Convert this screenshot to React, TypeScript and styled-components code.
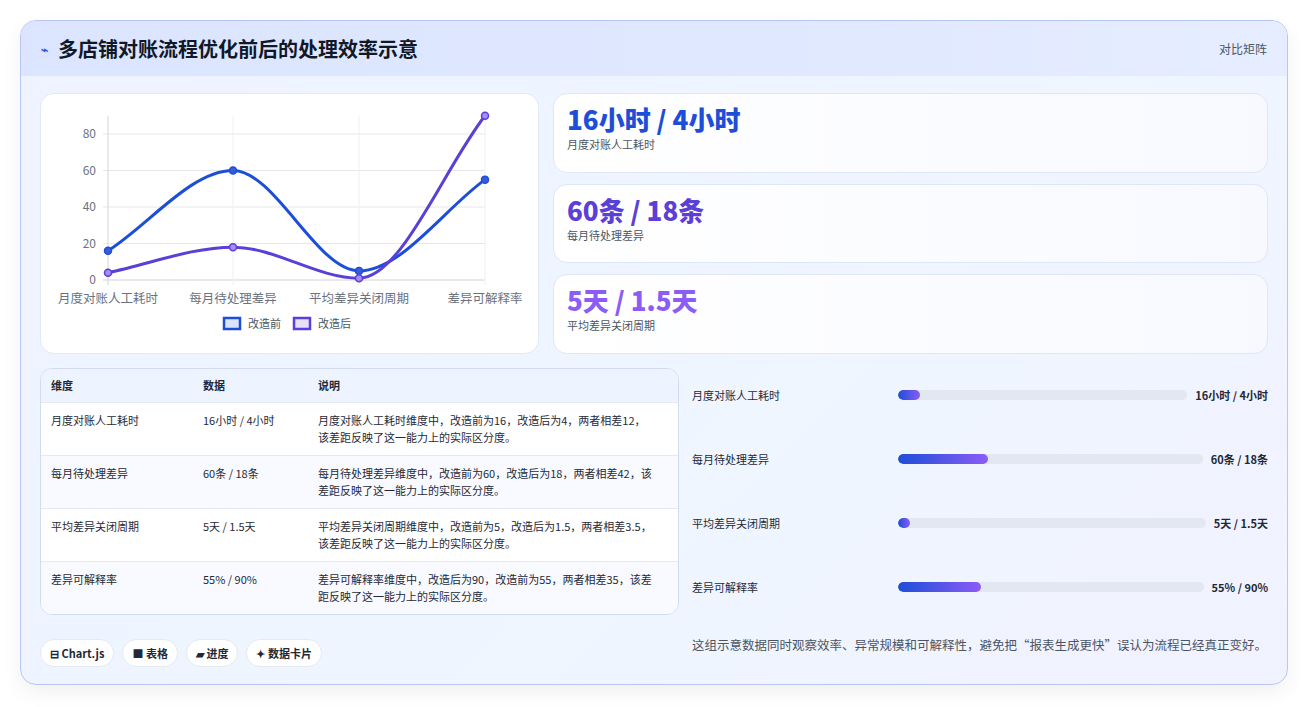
import React from "react";
import styled, { createGlobalStyle } from "styled-components";

const G = createGlobalStyle`
  body{margin:0;background:#fff;font-family:"Noto Sans CJK SC","Noto Sans",sans-serif;color:#1f2937;}
`;
const Page = styled.div`padding:20px 21px 22px 20px;box-sizing:border-box;height:707px;`;
const Card = styled.div`
  height:665px;box-sizing:border-box;border:1px solid #b9c6f3;border-radius:16px;overflow:hidden;
  background:linear-gradient(135deg,#eef3ff,#eff6ff 60%,#f1f2ff);box-shadow:0 8px 20px rgba(0,0,0,.06);
  display:flex;flex-direction:column;`;
const Header = styled.div`
  height:55px;flex:none;display:flex;align-items:center;justify-content:space-between;padding:0 20px 0 20px;
  background:linear-gradient(90deg,#dbe5ff,#e1e9ff 70%,#e6edff);`;
const Title = styled.h1`margin:0;font-size:20px;font-weight:700;color:#111827;display:flex;align-items:center;gap:10px;`;
const Bolt = styled.span`color:#2f5be0;font-size:12px;`;
const Tag = styled.span`font-size:12px;color:#4b5563;`;
const Body = styled.div`padding:17px 19px 0 19px;display:flex;flex-direction:column;`;
const Top = styled.div`display:grid;grid-template-columns:499px 1fr;gap:14px;height:261px;`;
const Panel = styled.div`background:#fff;border:1px solid #e3e8f5;border-radius:14px;`;
const ChartPanel = styled(Panel)`position:relative;`;
const Stats = styled.div`display:grid;grid-template-rows:repeat(3,1fr);gap:11px;`;
const Stat = styled.div`
  background:linear-gradient(90deg,#fff,#f7f9ff);border:1px solid #dfe6f7;border-radius:14px;padding:8px 13px;
  display:flex;flex-direction:column;`;
const StatVal = styled.div<{c:string}>`font-size:26px;font-weight:800;color:${p=>p.c};line-height:34px;font-family:"Noto Sans CJK SC",sans-serif;`;
const StatLab = styled.div`font-size:11px;color:#4b5563;`;
const Bottom = styled.div`display:grid;grid-template-columns:639px 1fr;gap:13px;margin-top:14px;`;
const Table = styled.div`border:1px solid #d3dcef;border-radius:12px;overflow:hidden;background:#fff;`;
const Row = styled.div<{h?:boolean;alt?:boolean}>`
  display:grid;grid-template-columns:152px 115px 1fr;padding:${p=>p.h?"8px 24px 8px 10px":"9px 24px 9px 10px"};
  font-size:11px;line-height:17px;color:#1f2937;border-top:${p=>p.h?"none":"1px solid #e5e9f2"};
  background:${p=>p.h?"#eef4ff":p.alt?"#f8faff":"#fff"};font-weight:${p=>p.h?600:400};
  min-height:${p=>p.h?"16px":"34px"};`;
const Right = styled.div`display:flex;flex-direction:column;`;
const Bars = styled.div`display:flex;flex-direction:column;gap:46px;padding:18px 0 0 0;`;
const BarRow = styled.div`display:flex;align-items:center;height:18px;font-size:11px;`;
const BarLab = styled.div`width:206px;flex:none;color:#1f2937;`;
const Track = styled.div`flex:1;height:10px;border-radius:5px;background:#e2e7f1;overflow:hidden;`;
const Fill = styled.div`height:100%;border-radius:5px;background:linear-gradient(90deg,#1d4ed8,#8b5cf6);`;
const BarVal = styled.div`margin-left:8px;font-weight:700;color:#1f2937;white-space:nowrap;`;
const Foot = styled.div`display:grid;grid-template-columns:639px 1fr;gap:13px;margin-top:14px;`;
const Chips = styled.div`display:flex;gap:8px;padding-top:10px;`;
const Chip = styled.span`
  height:28px;box-sizing:border-box;padding:0 9px;border:1px solid #e5e9f2;border-radius:14px;background:#fff;
  font-size:11px;font-weight:600;display:flex;align-items:center;gap:3px;color:#1f2937;`;
const Note = styled.p`margin:6px 0 0;font-size:12.5px;line-height:20px;color:#4b5563;`;

const xs=[67,192,318,444];
const y=(v:number)=>186-v*1.825;
function path(vals:number[]){
  const p=vals.map((v,i)=>[xs[i],y(v)]);
  const n=p.length;const d0:number[]=[];
  for(let i=0;i<n-1;i++)d0.push((p[i+1][1]-p[i][1])/(p[i+1][0]-p[i][0]));
  const m:number[]=p.map((_,i)=>{
    if(i===0)return d0[0];if(i===n-1)return d0[n-2];
    if(d0[i-1]*d0[i]<=0)return 0;return (d0[i-1]+d0[i])/2;
  });
  let d=`M${p[0][0]},${p[0][1]}`;
  for(let i=0;i<n-1;i++){
    const h=(p[i+1][0]-p[i][0])/3;
    d+=` C${p[i][0]+h},${p[i][1]+m[i]*h} ${p[i+1][0]-h},${p[i+1][1]-m[i+1]*h} ${p[i+1][0]},${p[i+1][1]}`;
  }
  return d;
}
const before=[16,60,5,55],after=[4,18,1,90];
const cats=["月度对账人工耗时","每月待处理差异","平均差异关闭周期","差异可解释率"];
const Chart=()=>(
  <svg width="497" height="259" style={{display:"block"}} fontFamily="Noto Sans CJK SC,sans-serif">
    {[0,20,40,60,80].map(v=><g key={v}><line x1={62} x2={444} y1={y(v)} y2={y(v)} stroke={v===0?"#d1d5db":"#e5e7eb"}/><text x={55} y={y(v)+4} fontSize="12" fill="#6b7280" textAnchor="end">{v}</text></g>)}
    {xs.map((x,i)=><g key={x}><line x1={x} x2={x} y1={22} y2={191} stroke={i===0?"#d1d5db":"#eef0f4"}/><text x={i===3?444:x} y={209} fontSize="12.5" fill="#6b7280" textAnchor="middle">{cats[i]}</text></g>)}
    <path d={path(before)} fill="none" stroke="#1d4ed8" strokeWidth="3"/>
    <path d={path(after)} fill="none" stroke="#5b3fd6" strokeWidth="3"/>
    {before.map((v,i)=><circle key={"b"+i} cx={xs[i]} cy={y(v)} r="3.5" fill="#3b5bdb" stroke="#1d4ed8" strokeWidth="1.5"/>)}
    {after.map((v,i)=><circle key={"a"+i} cx={xs[i]} cy={y(v)} r="3.5" fill="#a78bfa" stroke="#5b3fd6" strokeWidth="1.5"/>)}
    <rect x={183} y={224} width={16} height={11} fill="#dbe4fb" stroke="#1d4ed8" strokeWidth="2.5"/>
    <text x={207} y={234} fontSize="11" fill="#4b5563">改造前</text>
    <rect x={253} y={224} width={16} height={11} fill="#e6e0fb" stroke="#5b3fd6" strokeWidth="2.5"/>
    <text x={277} y={234} fontSize="11" fill="#4b5563">改造后</text>
  </svg>
);

const rows=[
  ["月度对账人工耗时","16小时 / 4小时","月度对账人工耗时维度中，改造前为16，改造后为4，两者相差12，该差距反映了这一能力上的实际区分度。"],
  ["每月待处理差异","60条 / 18条","每月待处理差异维度中，改造前为60，改造后为18，两者相差42，该差距反映了这一能力上的实际区分度。"],
  ["平均差异关闭周期","5天 / 1.5天","平均差异关闭周期维度中，改造前为5，改造后为1.5，两者相差3.5，该差距反映了这一能力上的实际区分度。"],
  ["差异可解释率","55% / 90%","差异可解释率维度中，改造后为90，改造前为55，两者相差35，该差距反映了这一能力上的实际区分度。"],
];
const bars:[string,string,number][]=[["月度对账人工耗时","16小时 / 4小时",7.5],["每月待处理差异","60条 / 18条",29.5],["平均差异关闭周期","5天 / 1.5天",4],["差异可解释率","55% / 90%",27]];

export default function App(){
  return(<><G/><Page><Card>
    <Header><Title><Bolt>⌁</Bolt>多店铺对账流程优化前后的处理效率示意</Title><Tag>对比矩阵</Tag></Header>
    <Body>
      <Top>
        <ChartPanel><Chart/></ChartPanel>
        <Stats>
          <Stat><StatVal c="#1d4ed8">16小时 / 4小时</StatVal><StatLab>月度对账人工耗时</StatLab></Stat>
          <Stat><StatVal c="#5b3fd6">60条 / 18条</StatVal><StatLab>每月待处理差异</StatLab></Stat>
          <Stat><StatVal c="#8b5cf6">5天 / 1.5天</StatVal><StatLab>平均差异关闭周期</StatLab></Stat>
        </Stats>
      </Top>
      <Bottom>
        <Table>
          <Row h><span>维度</span><span>数据</span><span>说明</span></Row>
          {rows.map((r,i)=><Row key={i} alt={i%2===1}><span>{r[0]}</span><span>{r[1]}</span><span>{r[2]}</span></Row>)}
        </Table>
        <Right><Bars>{bars.map(b=><BarRow key={b[0]}><BarLab>{b[0]}</BarLab><Track><Fill style={{width:b[2]+"%"}}/></Track><BarVal>{b[1]}</BarVal></BarRow>)}</Bars></Right>
      </Bottom>
      <Foot>
        <Chips><Chip>⊟ Chart.js</Chip><Chip>■ 表格</Chip><Chip>▰ 进度</Chip><Chip>✦ 数据卡片</Chip></Chips>
        <Note>这组示意数据同时观察效率、异常规模和可解释性，避免把“报表生成更快”误认为流程已经真正变好。</Note>
      </Foot>
    </Body>
  </Card></Page></>);
}
